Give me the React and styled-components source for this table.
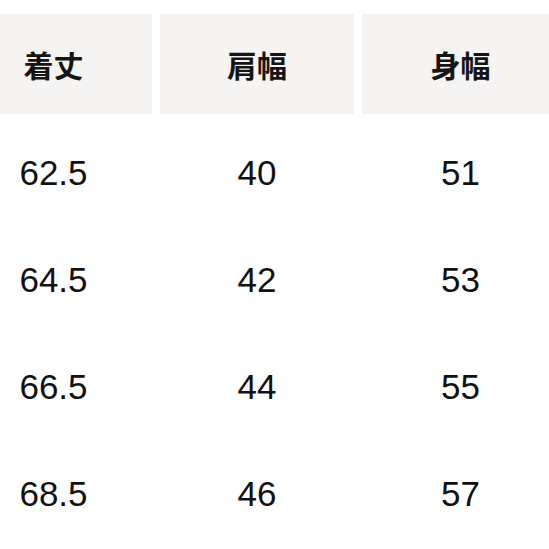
import React from 'react';
import styled, { createGlobalStyle } from 'styled-components';

const GlobalStyle = createGlobalStyle`
  html, body {
    margin: 0;
    padding: 0;
    background: #ffffff;
    overflow: hidden;
  }
`;

const headers = ['着丈', '肩幅', '身幅'];

const rows = [
  ['62.5', '40', '51'],
  ['64.5', '42', '53'],
  ['66.5', '44', '55'],
  ['68.5', '46', '57'],
];

const App = () => {
  return (
    <>
      <GlobalStyle />
      <Page>
        <Table>
          <HeadRow>
            {headers.map((h) => (
              <HeadCell key={h}>{h}</HeadCell>
            ))}
          </HeadRow>
          {rows.map((row) => (
            <Row key={row[0]}>
              {row.map((value, i) => (
                <Cell key={i}>{value}</Cell>
              ))}
            </Row>
          ))}
        </Table>
      </Page>
    </>
  );
};

const Page = styled.div`
  width: 549px;
  height: 549px;
  overflow: hidden;
  padding-top: 14px;
  box-sizing: border-box;
`;

const Table = styled.div`
  width: 604px;
  margin-left: -45px;
  display: flex;
  flex-direction: column;
`;

const HeadRow = styled.div`
  display: grid;
  grid-template-columns: 197px 194px 197px;
  column-gap: 8px;
  margin-bottom: 5px;
`;

const HeadCell = styled.div`
  height: 100px;
  background: #f5f4f2;
  display: flex;
  align-items: center;
  justify-content: center;
  font-family: 'Noto Sans CJK JP', 'Noto Sans', sans-serif;
  font-weight: 700;
  font-size: 30px;
  color: #151515;
`;

const Row = styled.div`
  display: grid;
  grid-template-columns: 197px 194px 197px;
  column-gap: 8px;
  height: 107px;
`;

const Cell = styled.div`
  display: flex;
  align-items: center;
  justify-content: center;
  font-family: 'Liberation Sans', Arial, sans-serif;
  font-size: 35px;
  line-height: 1;
  color: #111111;
`;

export default App;
